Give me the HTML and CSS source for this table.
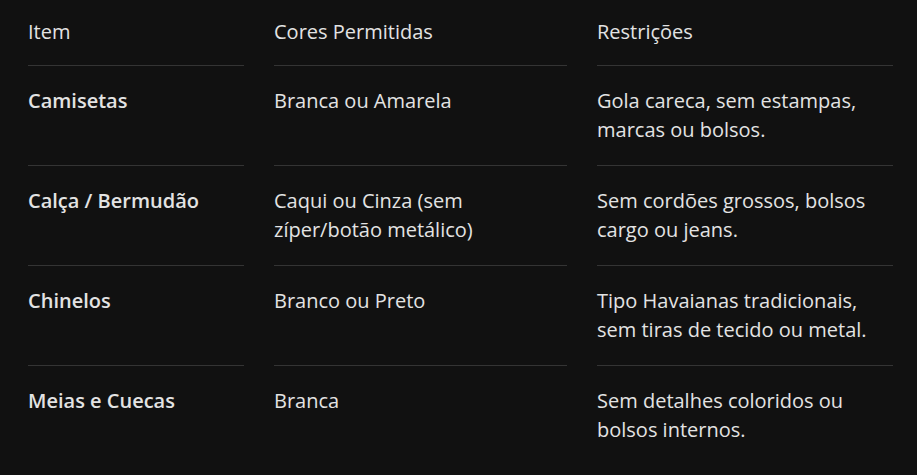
FILE: index.html
```html
<!DOCTYPE html>
<html lang="pt">
<head>
<meta charset="utf-8">
<link rel="stylesheet" href="styles.css">
</head>
<body>
<div class="table">
  <div class="cell head">Item</div>
  <div class="cell head">Cores Permitidas</div>
  <div class="cell head">Restrições</div>

  <div class="cell item">Camisetas</div>
  <div class="cell">Branca ou Amarela</div>
  <div class="cell">Gola careca, sem estampas, marcas ou bolsos.</div>

  <div class="cell item">Calça / Bermudão</div>
  <div class="cell">Caqui ou Cinza (sem zíper/botão metálico)</div>
  <div class="cell">Sem cordões grossos, bolsos cargo ou jeans.</div>

  <div class="cell item">Chinelos</div>
  <div class="cell">Branco ou Preto</div>
  <div class="cell">Tipo Havaianas tradicionais, sem tiras de tecido ou metal.</div>

  <div class="cell item last">Meias e Cuecas</div>
  <div class="cell last">Branca</div>
  <div class="cell last">Sem detalhes coloridos ou bolsos internos.</div>
</div>
</body>
</html>
```

FILE: styles.css
```css
html, body {
  margin: 0;
  padding: 0;
  background: #111111;
}
body {
  font-family: "Open Sans", "Roboto", sans-serif;
  font-size: 20px;
  line-height: 29px;
  color: #e3e3e3;
}
.table {
  display: grid;
  grid-template-columns: 216px 293px 296px;
  column-gap: 30px;
  margin-left: 28px;
}
.cell {
  padding: 20px 0 21px;
  border-bottom: 1px solid #343434;
}
.head {
  padding: 17px 0 19px;
}
.item {
  font-weight: 600;
}
.last {
  border-bottom: none;
}
```
